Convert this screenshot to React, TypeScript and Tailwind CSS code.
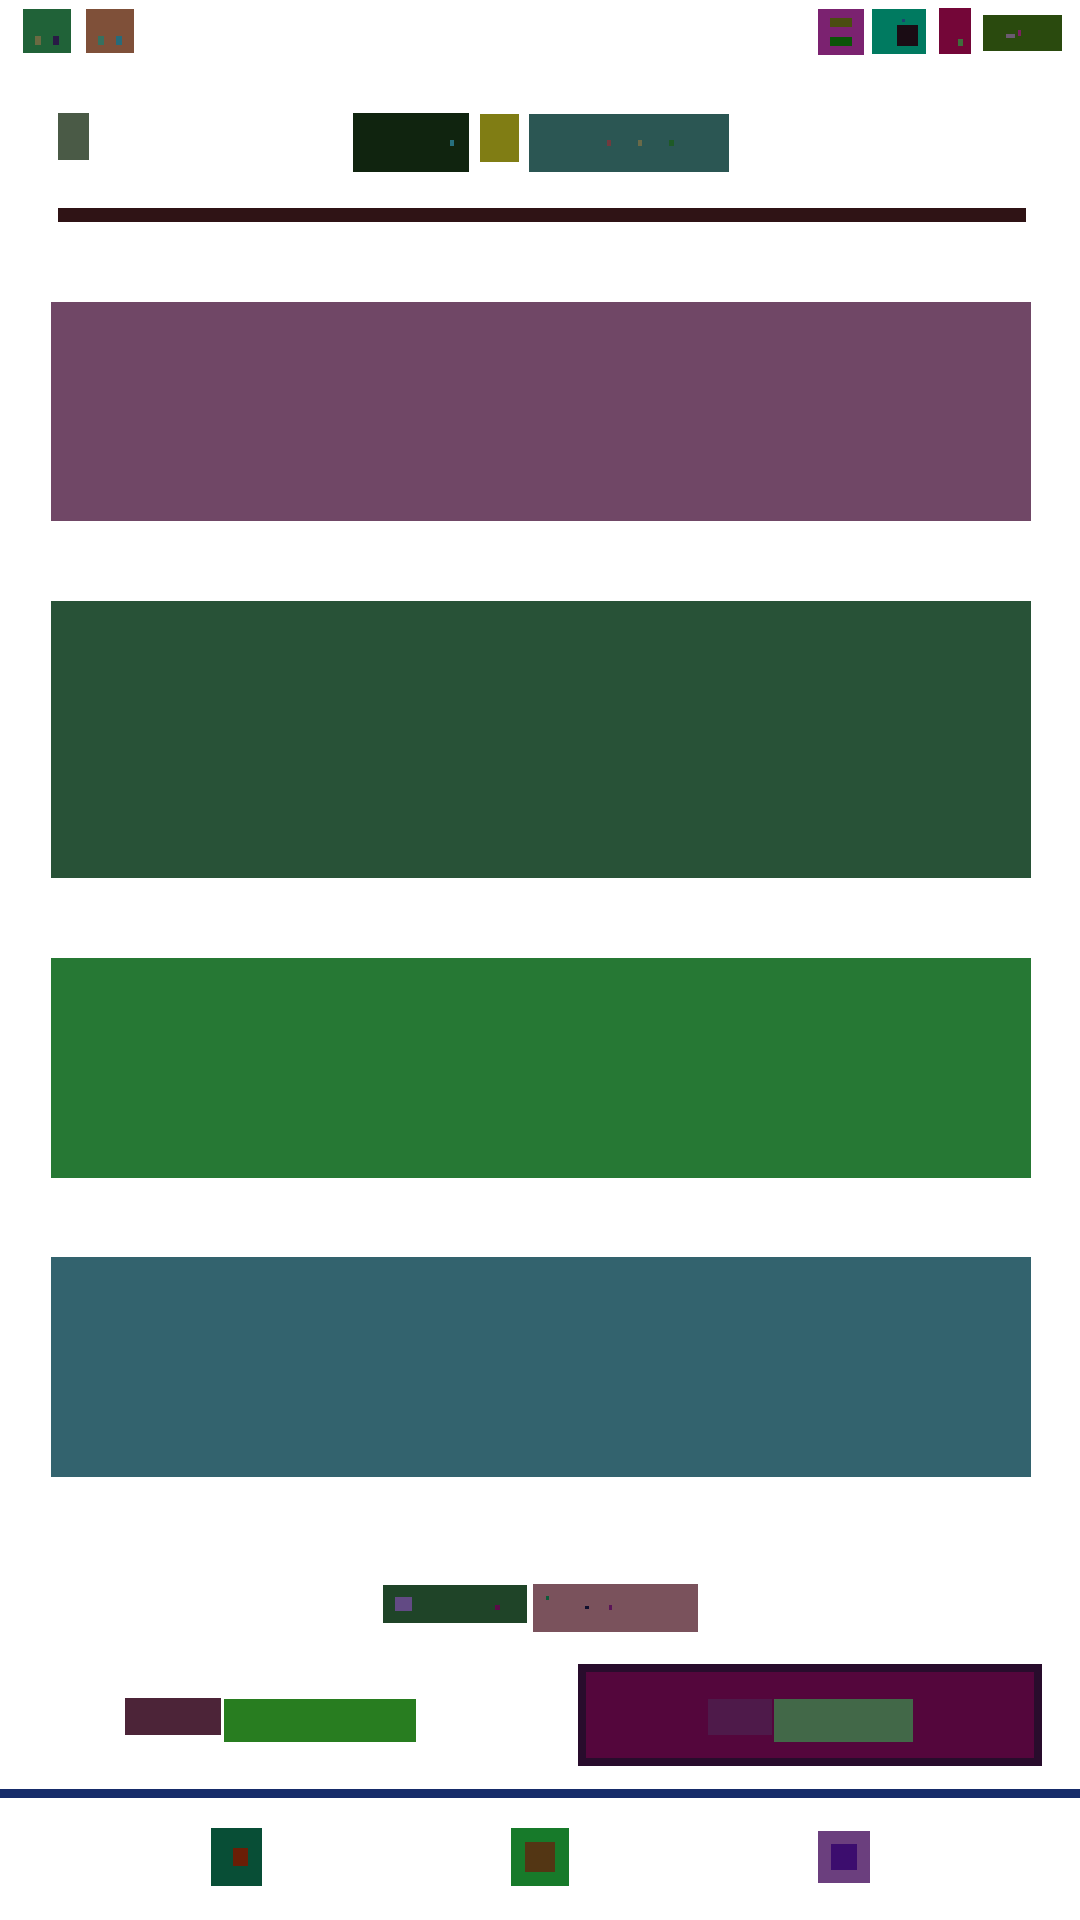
export default function App() {
  return (
    <div className="flex h-[1920px] w-[1080px] flex-col overflow-hidden bg-white">
      <header className="flex h-[55px] justify-between pl-[23px] pr-[18px] pt-[8px]">
        <div className="flex items-start gap-[15px] pt-px">
          <div className="flex h-[44px] w-[48px] gap-[12px] bg-[#206238] pl-[12px] pt-[27px]">
            <div className="h-[9px] w-[6px] bg-[#6a6a42]" />
            <div className="h-[9px] w-[6px] bg-[#281a45]" />
          </div>
          <div className="flex h-[44px] w-[48px] gap-[12px] bg-[#7f5039] pl-[12px] pt-[27px]">
            <div className="h-[9px] w-[6px] bg-[#37705f]" />
            <div className="h-[9px] w-[6px] bg-[#276b7a]" />
          </div>
        </div>
        <div className="flex items-start">
          <div className="mt-px flex h-[46px] w-[46px] flex-col gap-[10px] bg-[#7b2270] pl-[12px] pt-[9px]">
            <div className="h-[9px] w-[22px] bg-[#4a4d10]" />
            <div className="h-[9px] w-[22px] bg-[#0b5308]" />
          </div>
          <div className="ml-[8px] mt-px flex h-[45px] w-[54px] flex-col gap-[3px] bg-[#007a60] pl-[25px] pt-[10px]">
            <div className="ml-[5px] h-[3px] w-[3px] bg-[#1b4470]" />
            <div className="h-[21px] w-[21px] bg-[#1a0c14]" />
          </div>
          <div className="ml-[13px] h-[46px] w-[32px] bg-[#740638] pl-[19px] pt-[31px]">
            <div className="h-[7px] w-[5px] bg-[#3f6e3c]" />
          </div>
          <div className="ml-[12px] mt-[7px] flex h-[36px] w-[79px] items-start gap-[3px] bg-[#2a4a0e] pl-[23px] pt-[15px]">
            <div className="mt-[4px] h-[4px] w-[9px] bg-[#6b5a70]" />
            <div className="h-[6px] w-[3px] bg-[#7e2060]" />
          </div>
        </div>
      </header>

      <section className="mt-[58px] flex h-[59px] items-start pl-[58px]">
        <div className="h-[47px] w-[31px] bg-[#4a5a46]" />
        <div className="ml-[264px] h-[59px] w-[116px] bg-[#10240f] pl-[97px] pt-[27px]">
          <div className="h-[6px] w-[4px] bg-[#27707e]" />
        </div>
        <div className="ml-[11px] mt-px h-[48px] w-[39px] bg-[#807d14]" />
        <div className="ml-[10px] mt-px flex h-[58px] w-[200px] items-start gap-[27px] bg-[#2b5653] pl-[78px] pt-[26px]">
          <div className="h-[6px] w-[4px] bg-[#713a3e]" />
          <div className="h-[6px] w-[4px] bg-[#6a6a48]" />
          <div className="h-[6px] w-[5px] bg-[#1e5a26]" />
        </div>
      </section>

      <div className="ml-[58px] mt-[36px] h-[14px] w-[968px] bg-[#2f1315]" />

      <main className="flex flex-col pl-[51px] pr-[49px]">
        <div className="mt-[80px] h-[219px] bg-[#704766]" />
        <div className="mt-[80px] h-[277px] bg-[#285237]" />
        <div className="mt-[80px] h-[220px] bg-[#267834]" />
        <div className="mt-[79px] h-[220px] bg-[#33636e]" />
      </main>

      <section className="mt-[107px] flex h-[48px] items-start pl-[383px]">
        <div className="mt-px flex h-[38px] w-[144px] items-start bg-[#1f4428] pl-[12px] pt-[12px]">
          <div className="h-[14px] w-[17px] bg-[#624a84]" />
          <div className="ml-[83px] mt-[8px] h-[5px] w-[5px] bg-[#5a0c48]" />
        </div>
        <div className="ml-[6px] flex h-[48px] w-[165px] items-start bg-[#7a525c] pl-[13px] pt-[12px]">
          <div className="h-[4px] w-[3px] bg-[#0e5a3a]" />
          <div className="ml-[36px] mt-[10px] h-[3px] w-[4px] bg-[#10102e]" />
          <div className="ml-[20px] mt-[9px] h-[5px] w-[3px] bg-[#5a1458]" />
        </div>
      </section>

      <section className="mt-[32px] flex h-[102px] items-start pl-[125px]">
        <div className="mt-[34px] flex items-start gap-[3px]">
          <div className="h-[37px] w-[96px] bg-[#4c2438]" />
          <div className="mt-px h-[43px] w-[192px] bg-[#287d20]" />
        </div>
        <div className="ml-[162px] flex h-[102px] w-[464px] items-start gap-[2px] border-[8px] border-[#280c2c] bg-[#54063c] pl-[122px] pt-[27px]">
          <div className="h-[36px] w-[64px] bg-[#4e1a4a]" />
          <div className="h-[43px] w-[139px] bg-[#426848]" />
        </div>
      </section>

      <div className="mt-[23px] h-[9px] bg-[#162c6a]" />

      <footer className="mt-[30px] flex items-start pl-[211px]">
        <div className="h-[58px] w-[51px] bg-[#084e36] pl-[22px] pt-[20px]">
          <div className="h-[18px] w-[15px] bg-[#6a1e06]" />
        </div>
        <div className="ml-[249px] flex h-[58px] w-[58px] items-center justify-center bg-[#177a2a]">
          <div className="h-[30px] w-[30px] bg-[#533614]" />
        </div>
        <div className="ml-[249px] mt-[3px] flex h-[52px] w-[52px] items-center justify-center bg-[#6b3f7e]">
          <div className="h-[26px] w-[26px] bg-[#3c0d6e]" />
        </div>
      </footer>
    </div>
  );
}
